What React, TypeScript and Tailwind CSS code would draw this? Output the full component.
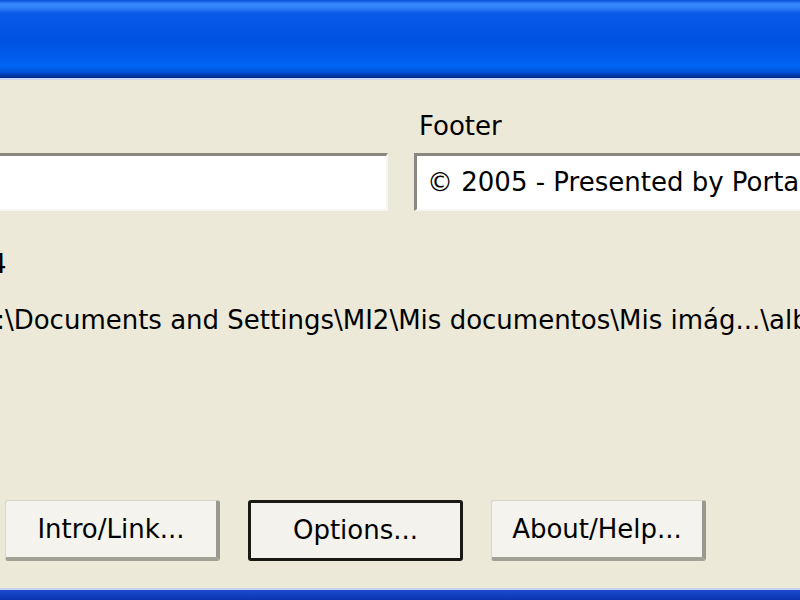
const fieldClass =
  "h-[58px] bg-white border-t-[3px] border-t-[#8a8880] border-b-2 border-b-[#f7f6f0] flex items-center text-[26px] text-black whitespace-nowrap overflow-hidden";

const XpButton = ({ label, isDefault }: { label: string; isDefault?: boolean }) => (
  <div
    className={
      isDefault
        ? "w-[215px] h-[61px] flex items-center justify-center rounded-[3px] border-[3px] border-[#1a1a14] bg-[#f3f2ec] text-[26px] text-black"
        : "w-[215px] h-[61px] flex items-center justify-center rounded-[3px] border border-[#d8d6c8] border-r-[4px] border-r-[#9a988c] border-b-[4px] border-b-[#a3a196] bg-[#f4f3ee] text-[26px] text-black"
    }
  >
    {label}
  </div>
);

export default function App() {
  return (
    <div
      className="w-[800px] h-[600px] overflow-hidden bg-[#ece9d8] flex flex-col"
      style={{ fontFamily: "'DejaVu Sans', sans-serif" }}
    >
      {/* Title bar */}
      <div className="h-[78px] shrink-0 bg-[linear-gradient(to_bottom,#0a4fd6_0px,#3b8bff_4px,#2f7ff7_8px,#0a5ae8_13px,#0052e0_40px,#005ded_58px,#0066f7_66px,#0052d8_72px,#0034a0_76px,#002a88_78px)]" />
      <div className="h-[2px] shrink-0 bg-[#c9d8f2]" />

      {/* Fields */}
      <div className="flex gap-[26px] mt-[30px]">
        <div className="w-[388px] shrink-0 flex flex-col">
          <div className="h-[32px] mb-[11px]" />
          <div className={fieldClass + " border-r-2 border-r-[#f7f6f0]"} />
        </div>
        <div className="flex-1 flex flex-col">
          <div className="h-[32px] mb-[11px] pl-[5px] text-[26px] leading-[32px] text-black">Footer</div>
          <div className={fieldClass + " border-l-[3px] border-l-[#8a8880] pl-[10px]"}>
            © 2005 - Presented by Portal Albums
          </div>
        </div>
      </div>

      {/* Info */}
      <div className="mt-[37px] text-[26px] leading-[32px] text-black whitespace-nowrap">
        <div className="-ml-[10px]">4</div>
        <div className="mt-[24px] -ml-[22px]">
          C:\Documents and Settings\MI2\Mis documentos\Mis imág...\albums
        </div>
      </div>

      {/* Buttons */}
      <div className="mt-auto mb-[27px] flex gap-[28px] pl-[5px]">
        <XpButton label="Intro/Link..." />
        <XpButton label="Options..." isDefault />
        <XpButton label="About/Help..." />
      </div>

      {/* Bottom frame */}
      <div className="h-[2px] shrink-0 bg-[#c4d2ee]" />
      <div className="h-[10px] shrink-0 bg-[linear-gradient(to_bottom,#1c4bd0,#0a35b0)]" />
    </div>
  );
}
